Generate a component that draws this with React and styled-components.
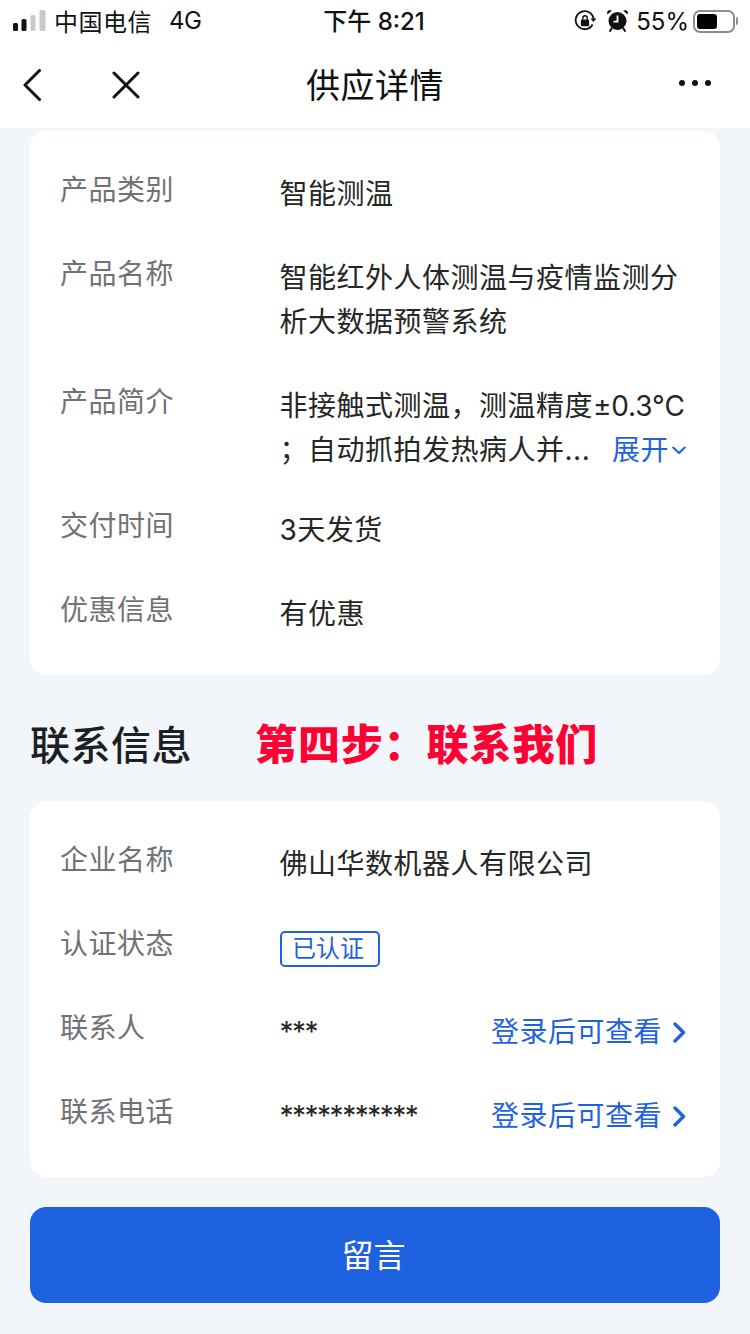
import React from "react";
import styled, { createGlobalStyle } from "styled-components";

const blue = "#1f62e0";
const sans = `Inter, "Noto Sans CJK SC", sans-serif`;

const GlobalStyle = createGlobalStyle`
  html, body {
    margin: 0;
    padding: 0;
    background: #f2f5f9;
  }
  * {
    box-sizing: border-box;
  }
`;

const productRows = [
  { label: "产品类别", lines: ["智能测温"] },
  { label: "产品名称", lines: ["智能红外人体测温与疫情监测分", "析大数据预警系统"] },
  { label: "产品简介", lines: ["非接触式测温，测温精度"], latin: "±0.3°C", more: "；自动抓拍发热病人并...", tight: true },
  { label: "交付时间", lines: ["3天发货"] },
  { label: "优惠信息", lines: ["有优惠"] },
];

function SignalIcon() {
  return (
    <svg width="33" height="22" viewBox="0 0 33 22">
      <rect x="0" y="13" width="5" height="8" rx="1.5" fill="#111" />
      <rect x="8.5" y="9" width="5" height="12" rx="1.5" fill="#111" />
      <rect x="17.5" y="5" width="5" height="16" rx="1.5" fill="#c9c9c9" />
      <rect x="26.5" y="0" width="6" height="21" rx="1.5" fill="#c9c9c9" />
    </svg>
  );
}

function LockIcon() {
  return (
    <svg width="22" height="22" viewBox="0 0 22 22" fill="none">
      <path d="M18.6 14.5A9 9 0 1 1 19.6 9" stroke="#111" strokeWidth="1.8" />
      <path d="M16.4 8.5h6l-3 3.6z" fill="#111" />
      <rect x="6.9" y="9.4" width="8.2" height="6.8" rx="1" fill="#111" />
      <path d="M8.8 9.8V8a2.2 2.2 0 0 1 4.4 0v1.8" stroke="#111" strokeWidth="1.4" />
    </svg>
  );
}

function AlarmIcon() {
  return (
    <svg width="24" height="24" viewBox="0 0 24 24" fill="none">
      <circle cx="11.5" cy="12" r="9" fill="#111" />
      <path d="M11.5 6.5V12.6H7.5" stroke="#fff" strokeWidth="1.8" />
      <path d="M1.4 5.6 5.8 1.8 3.2 1 1 3zM21.6 5.6 17.2 1.8 19.8 1 22 3z" fill="#111" />
      <path d="M5.6 19.5 4 22M17.4 19.5l1.6 2.5" stroke="#111" strokeWidth="2" strokeLinecap="round" />
    </svg>
  );
}

function BackIcon() {
  return (
    <svg width="18" height="32" viewBox="0 0 18 32" fill="none">
      <path d="M16.5 1.5 2 16l14.5 14.5" stroke="#111" strokeWidth="3" strokeLinecap="round" strokeLinejoin="round" />
    </svg>
  );
}

function CloseIcon() {
  return (
    <svg width="28" height="28" viewBox="0 0 28 28" fill="none">
      <path d="M2 2l24 24M26 2 2 26" stroke="#111" strokeWidth="3" strokeLinecap="round" />
    </svg>
  );
}

function SmallChevron() {
  return (
    <svg width="14" height="9" viewBox="0 0 14 9" fill="none">
      <path d="M1.2 1.5 7 7l5.8-5.5" stroke={blue} strokeWidth="2" strokeLinecap="round" strokeLinejoin="round" />
    </svg>
  );
}

function LinkChevron() {
  return (
    <svg width="13" height="21" viewBox="0 0 13 21" fill="none">
      <path d="M2 2l8.5 8.5L2 19" stroke={blue} strokeWidth="3.4" strokeLinecap="round" strokeLinejoin="round" />
    </svg>
  );
}

function LoginLink() {
  return (
    <LinkText>
      登录后可查看
      <LinkChevron />
    </LinkText>
  );
}

export default function App() {
  return (
    <Page>
      <GlobalStyle />
      <Header>
        <StatusBar>
          <StatusGroup>
            <SignalIcon />
            <Carrier>中国电信</Carrier>
            <Network>4G</Network>
          </StatusGroup>
          <Clock>下午 8:21</Clock>
          <StatusRight>
            <LockIcon />
            <AlarmIcon />
            <Percent>55%</Percent>
            <Battery>
              <BatteryFill />
            </Battery>
          </StatusRight>
        </StatusBar>
        <Nav>
          <NavLeft>
            <BackIcon />
            <CloseIcon />
          </NavLeft>
          <NavTitle>供应详情</NavTitle>
          <NavRight>
            <Dot />
            <Dot />
            <Dot />
          </NavRight>
        </Nav>
      </Header>

      <Content>
        <Card>
          {productRows.map((row) => (
            <Row key={row.label} $tight={row.tight}>
              <Label>{row.label}</Label>
              <Value>
                {row.lines.map((line) => (
                  <Line key={line}>
                    {line}
                    {row.latin && <Latin>{row.latin}</Latin>}
                  </Line>
                ))}
                {row.more && (
                  <SplitLine>
                    {row.more}
                    <Expand>
                      展开
                      <SmallChevron />
                    </Expand>
                  </SplitLine>
                )}
              </Value>
            </Row>
          ))}
        </Card>

        <SectionHead>
          <SectionTitle>联系信息</SectionTitle>
          <StepNote>第四步：联系我们</StepNote>
        </SectionHead>

        <Card>
          <Row>
            <Label>企业名称</Label>
            <Value>
              <Line>佛山华数机器人有限公司</Line>
            </Value>
          </Row>
          <Row>
            <Label>认证状态</Label>
            <Value>
              <Badge>已认证</Badge>
            </Value>
          </Row>
          <Row>
            <Label>联系人</Label>
            <Value>
              <SplitLine>
                <Masked>***</Masked>
                <LoginLink />
              </SplitLine>
            </Value>
          </Row>
          <Row>
            <Label>联系电话</Label>
            <Value>
              <SplitLine>
                <Masked>***********</Masked>
                <LoginLink />
              </SplitLine>
            </Value>
          </Row>
        </Card>

        <MessageButton>留言</MessageButton>
      </Content>
    </Page>
  );
}

const Page = styled.div`
  width: 750px;
  height: 1334px;
  overflow: hidden;
  background: #f2f5f9;
  font-family: ${sans};
  color: #222;
`;

const Header = styled.header`
  background: #fff;
`;

const StatusBar = styled.div`
  height: 42px;
  padding: 0 13px;
  display: grid;
  grid-template-columns: 1fr auto 1fr;
  align-items: center;
  font-size: 24px;
  color: #111;
`;

const StatusGroup = styled.div`
  display: flex;
  align-items: center;
`;

const Carrier = styled.span`
  margin-left: 8px;
  padding-bottom: 1px;
  letter-spacing: 0.5px;
`;

const Network = styled.span`
  margin-left: 17px;
  padding-bottom: 1px;
  letter-spacing: -0.5px;
`;

const Clock = styled.span`
  margin-left: -2px;
  padding-bottom: 3px;
  font-weight: 500;
`;

const StatusRight = styled.div`
  display: flex;
  align-items: center;
  justify-content: flex-end;
  gap: 10px;
`;

const Percent = styled.span`
  margin-left: -4px;
`;

const Battery = styled.div`
  position: relative;
  width: 42px;
  height: 23px;
  margin-left: -6px;
  margin-right: 2px;
  padding: 2px;
  border: 2px solid #8e8e8e;
  border-radius: 7px;

  &::after {
    content: "";
    position: absolute;
    right: -5px;
    top: 5px;
    width: 2px;
    height: 8px;
    border-radius: 0 2px 2px 0;
    background: #8e8e8e;
  }
`;

const BatteryFill = styled.div`
  width: 20px;
  height: 15px;
  border-radius: 3px;
  background: #000;
`;

const Nav = styled.nav`
  height: 86px;
  display: grid;
  grid-template-columns: 1fr auto 1fr;
  align-items: center;
`;

const NavLeft = styled.div`
  display: flex;
  align-items: center;
  gap: 71px;
  padding-left: 23px;
`;

const NavTitle = styled.h1`
  margin: 0 0 4px;
  font-size: 34px;
  font-weight: 400;
  letter-spacing: 0.5px;
  color: #111;
`;

const NavRight = styled.div`
  display: flex;
  justify-content: flex-end;
  gap: 7px;
  padding: 0 39px 4px 0;
`;

const Dot = styled.span`
  width: 6px;
  height: 6px;
  border-radius: 50%;
  background: #111;
`;

const Content = styled.main`
  padding: 3px 30px 0;
`;

const Card = styled.section`
  padding: 41px 30px 39px;
  background: #fff;
  border-radius: 16px;
  display: flex;
  flex-direction: column;
`;

const Row = styled.div`
  display: grid;
  grid-template-columns: 219.5px 1fr;
  margin-bottom: ${(props) => (props.$tight ? "36px" : "40px")};

  &:last-child {
    margin-bottom: 0;
  }
`;

const Label = styled.div`
  font-size: 28px;
  line-height: 36px;
  letter-spacing: 0.5px;
  color: #707276;
`;

const Value = styled.div`
  font-size: 28px;
  line-height: 44px;
  letter-spacing: 0.5px;
  color: #262626;
  min-height: 44px;
`;

const Line = styled.div`
  white-space: nowrap;
`;

const Latin = styled.span`
  letter-spacing: -0.2px;
`;

const SplitLine = styled.div`
  display: flex;
  justify-content: space-between;
  align-items: center;
  padding-right: 4px;
  white-space: nowrap;
`;

const Expand = styled.span`
  display: inline-flex;
  align-items: center;
  gap: 3px;
  color: ${blue};
`;

const Masked = styled.span`
  letter-spacing: -1.5px;
`;

const LinkText = styled.span`
  display: inline-flex;
  align-items: center;
  gap: 11px;
  color: ${blue};
`;

const Badge = styled.span`
  display: inline-block;
  width: 100px;
  height: 36px;
  margin-top: 5px;
  padding-right: 3px;
  border: 2px solid ${blue};
  border-radius: 5px;
  font-size: 24px;
  line-height: 32px;
  letter-spacing: 0;
  text-align: center;
  color: ${blue};
  vertical-align: top;
`;

const SectionHead = styled.div`
  height: 126px;
  padding-top: 9px;
  display: flex;
  align-items: center;
  gap: 63px;
`;

const SectionTitle = styled.h2`
  margin: 0;
  font-size: 40px;
  font-weight: 500;
  letter-spacing: 0.5px;
  color: #1c1f24;
`;

const StepNote = styled.span`
  margin-bottom: 2px;
  font-size: 42px;
  font-weight: 900;
  letter-spacing: 0.9px;
  color: #ff0033;
`;

const MessageButton = styled.button`
  display: block;
  width: 100%;
  height: 96px;
  margin-top: 30px;
  padding: 0 3px 5px 0;
  border: 0;
  border-radius: 16px;
  background: ${blue};
  color: #fff;
  font-family: ${sans};
  font-size: 32px;
`;
